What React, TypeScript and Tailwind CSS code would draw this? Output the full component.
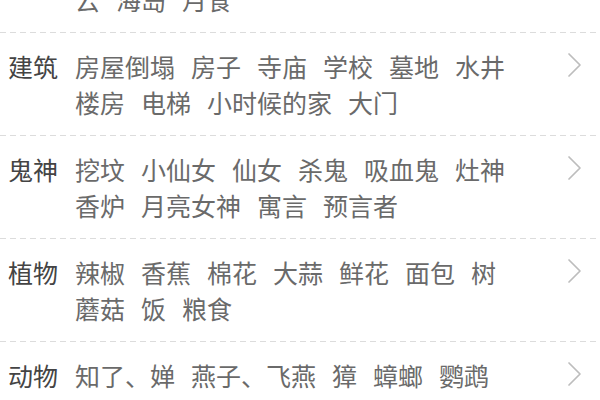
import React from 'react';

interface Category {
  label: string;
  items: string[];
}

const categories: Category[] = [
  { label: '自然', items: ['太阳', '月亮', '星星', '彩虹', '闪电', '下雨', '地震', '云', '海岛', '月食'] },
  { label: '建筑', items: ['房屋倒塌', '房子', '寺庙', '学校', '墓地', '水井', '楼房', '电梯', '小时候的家', '大门'] },
  { label: '鬼神', items: ['挖坟', '小仙女', '仙女', '杀鬼', '吸血鬼', '灶神', '香炉', '月亮女神', '寓言', '预言者'] },
  { label: '植物', items: ['辣椒', '香蕉', '棉花', '大蒜', '鲜花', '面包', '树', '蘑菇', '饭', '粮食'] },
  { label: '动物', items: ['知了、婵', '燕子、飞燕', '獐', '蟑螂', '鹦鹉', '蜘蛛', '老鼠', '乌龟', '蝴蝶', '蚂蚁'] },
];

function Chevron() {
  return (
    <svg width="16" height="26" viewBox="0 0 16 26" className="shrink-0 mt-[4px]">
      <polyline points="3,2 14,13 3,24" fill="none" stroke="#bdbdbd" strokeWidth="1.7" strokeLinecap="round" strokeLinejoin="round" />
    </svg>
  );
}

function Divider() {
  return (
    <div className="h-px w-full bg-[linear-gradient(to_right,#dcdcdc_65%,transparent_0)] bg-[length:10px_1px] bg-repeat-x" />
  );
}

export default function App() {
  return (
    <div
      className="w-[600px] h-[400px] overflow-hidden bg-white"
      style={{ fontFamily: '"Noto Sans CJK SC", "Noto Sans", sans-serif' }}
    >
      <div className="mt-[-70px]">
        {categories.map((cat, idx) => (
          <div key={cat.label}>
            {idx > 0 && <Divider />}
            <div className="flex items-start pl-[8px] pr-[18px] pt-[15px] pb-[15px]">
              <div className="w-[50px] shrink-0 text-[25px] leading-[36px] text-[#444444]">
                {cat.label}
              </div>
              <div className="ml-[17px] w-[460px] flex flex-wrap gap-x-[16px] text-[25px] leading-[36px] text-[#6a6a6a]">
                {cat.items.map(item => (
                  <span key={item} className="whitespace-nowrap">{item}</span>
                ))}
              </div>
              <div className="ml-auto">
                <Chevron />
              </div>
            </div>
          </div>
        ))}
      </div>
    </div>
  );
}
